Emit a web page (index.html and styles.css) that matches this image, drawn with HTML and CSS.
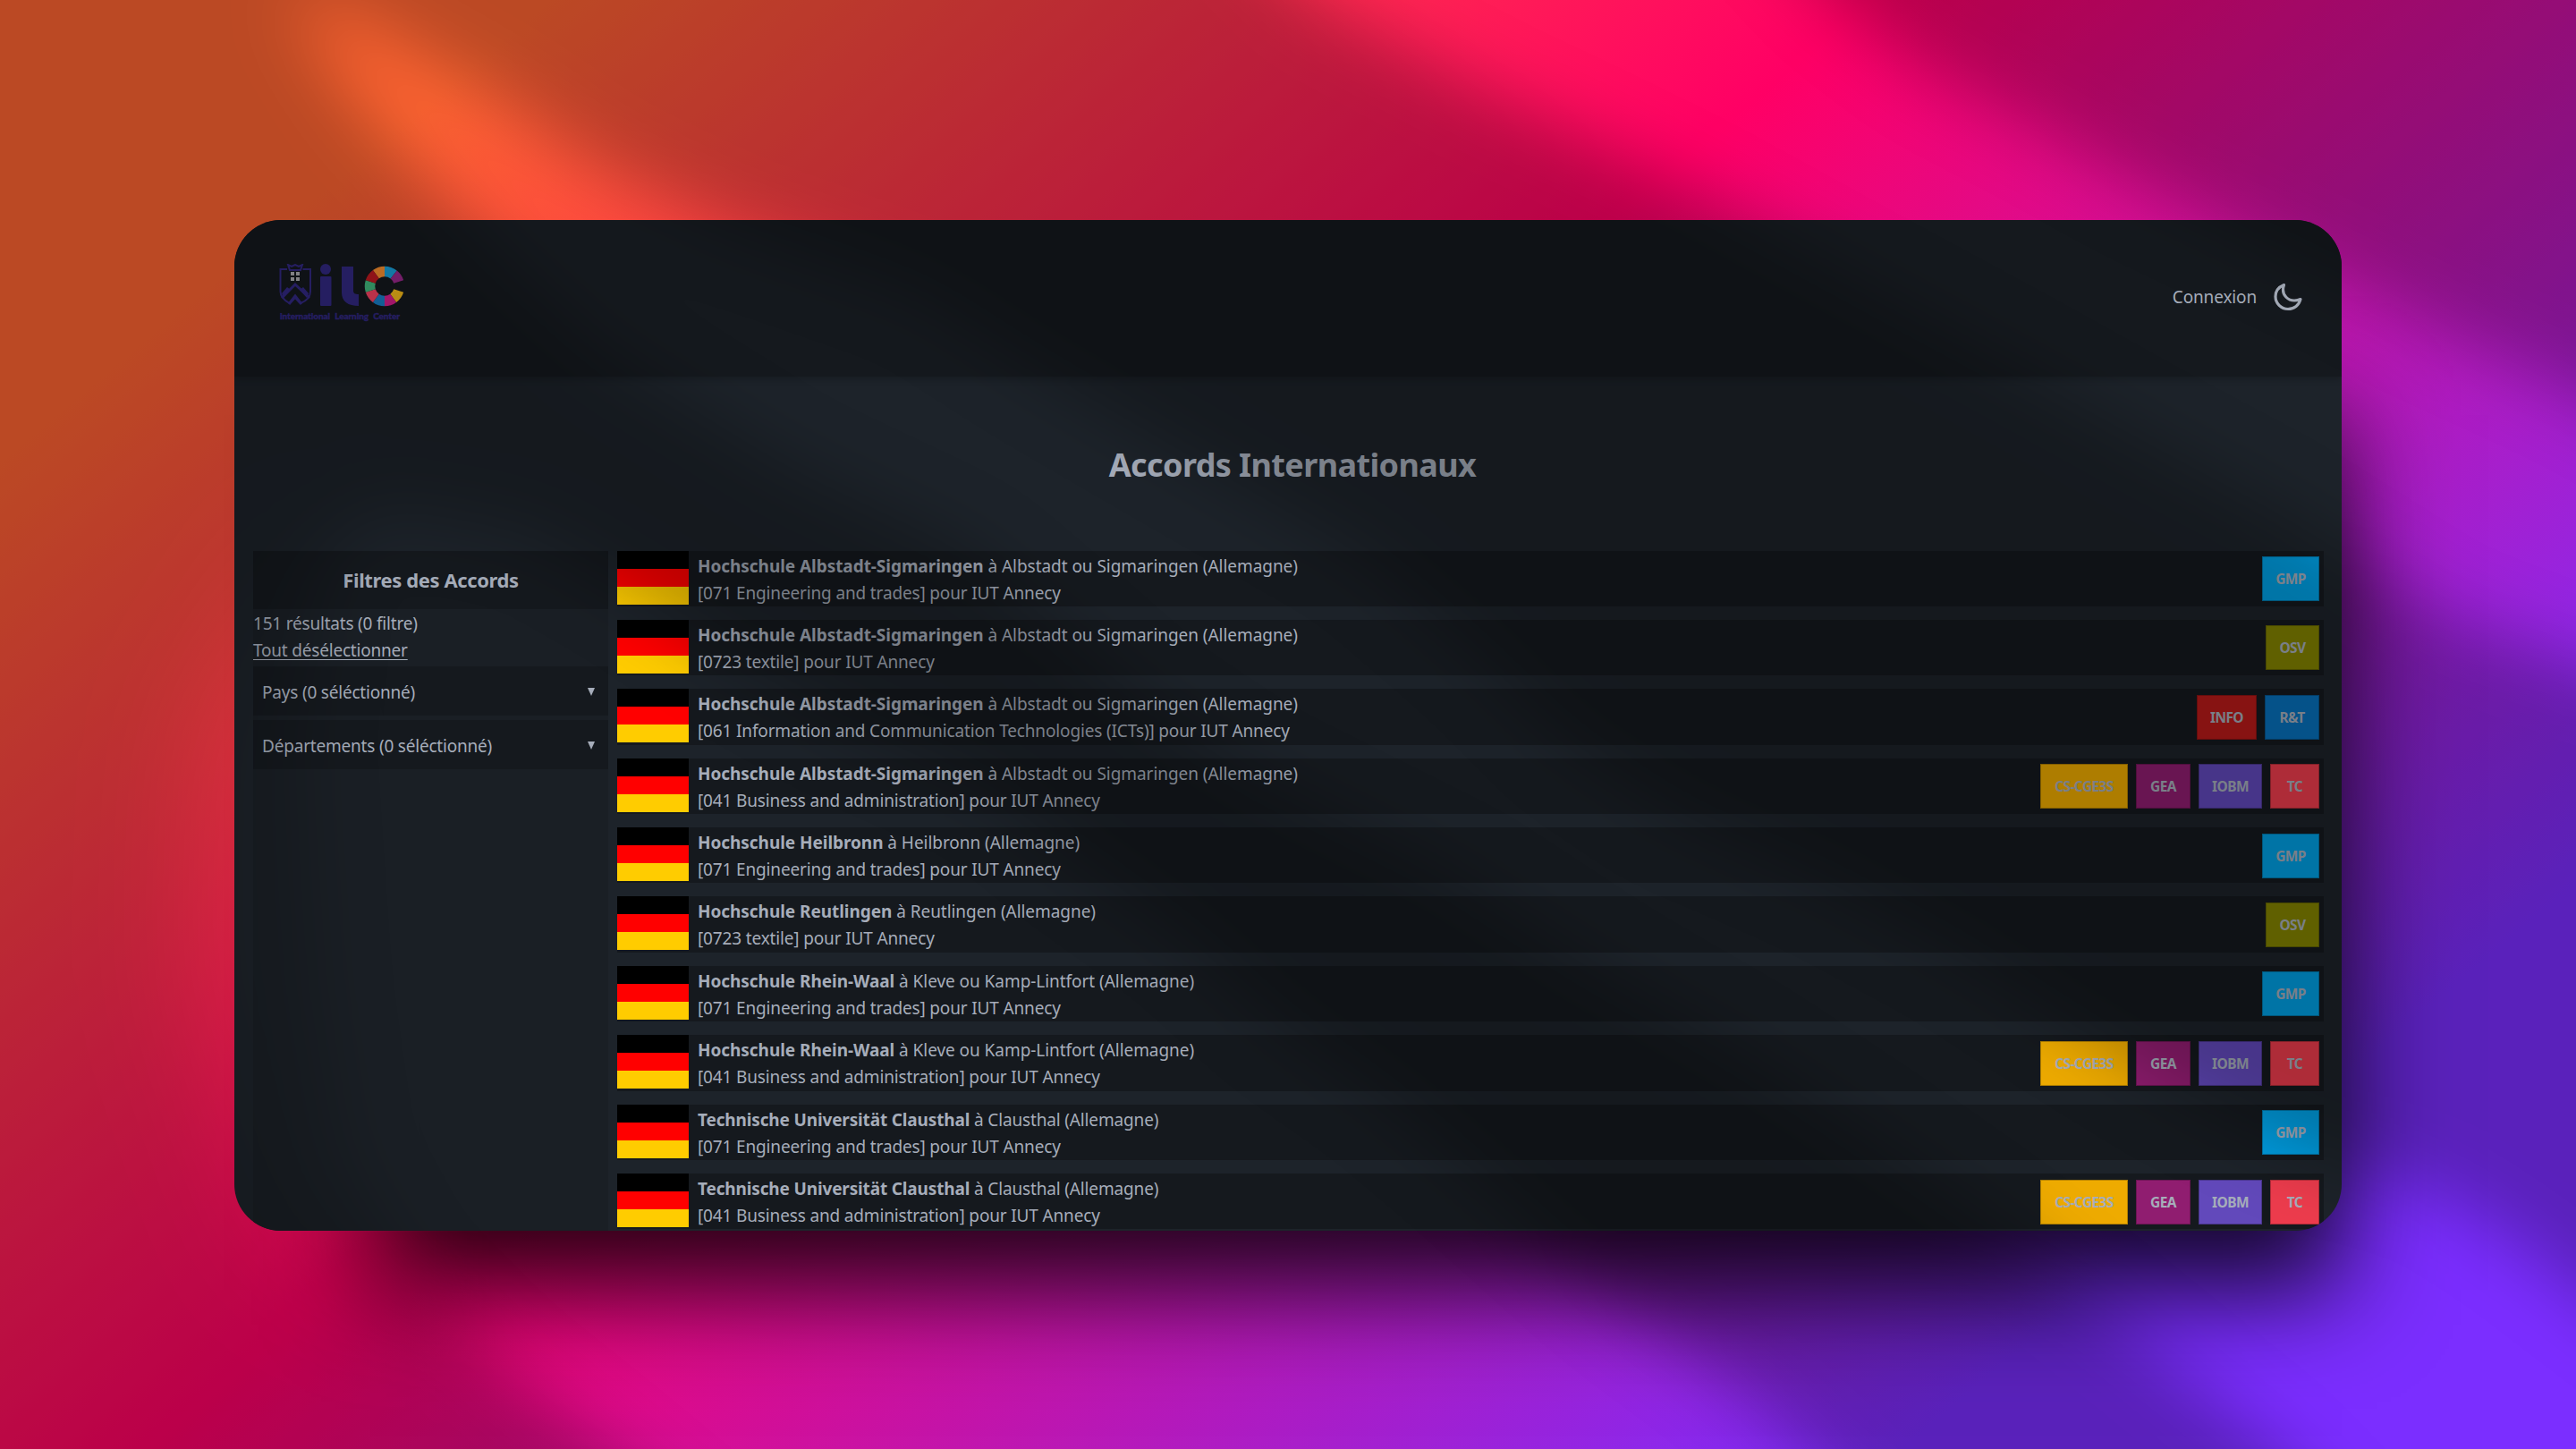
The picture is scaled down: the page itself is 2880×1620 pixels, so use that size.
FILE: index.html
```html
<!DOCTYPE html>
<html lang="fr">
<head>
<meta charset="utf-8">
<title>Accords Internationaux</title>
<link rel="stylesheet" href="styles.css">
</head>
<body>
<div class="backdrop">
  <div class="window">
    <header class="topbar">
      <svg class="logo" viewBox="0 0 150 76" width="150" height="76">
        <g fill="none" stroke="#332985" stroke-width="2">
          <path d="M10 6H2.5V31C2.5 38 9 42 12.500 44C15 43 16 41 19 38C22 41 23 43 25 44C30 42 36 38 36 31V6H27.500"/>
          <path d="M4 38L19 23L35 38M12 45L19 36L26 45" stroke-width="3"/>
          <path d="M11 1L13 7H25L27 1L23 3L19 1L15 3Z"/>
        </g>
        <path d="M4 33L10 26L14 29L6 38ZM34 33L28 26L24 29L32 38Z" fill="#332985"/>
        <path d="M14 9h4v4h-4zM20 9h4v4h-4zM14 15h4v4h-4zM20 15h4v4h-4z" fill="#b0b0b4"/>
        <g fill="#332985">
          <circle cx="53" cy="6" r="6"/>
          <rect x="47" y="14" width="12.500" height="33" rx="1"/>
          <path d="M71 3H84V30C84 33 86 34 90 34V47C78 47 71 42 71 32Z"/>
        </g>
        <g fill="none" stroke-width="11.500" transform="translate(119 25)">
          <path stroke="#ff9330" d="M-9.700 -13.300A16.500 16.500 0 0 1 0 -16.500"/>
          <path stroke="#1ba4e0" d="M0 -16.500A16.500 16.500 0 0 1 10.200 -13"/>
          <path stroke="#9d2a8f" d="M10.200 -13A16.500 16.500 0 0 1 15.700 -5"/>
          <path stroke="#fcbf1b" d="M15.700 5A16.500 16.500 0 0 1 9.700 13.300"/>
          <path stroke="#dd1e8f" d="M9.700 13.300A16.500 16.500 0 0 1 0 16.500"/>
          <path stroke="#1a80cc" d="M0 16.500A16.500 16.500 0 0 1 -9.700 13.300"/>
          <path stroke="#fc4566" d="M-9.700 13.300A16.500 16.500 0 0 1 -15.700 5"/>
          <path stroke="#43bd81" d="M-15.700 5A16.500 16.500 0 0 1 -15.700 -5"/>
          <path stroke="#c41b22" d="M-15.700 -5A16.500 16.500 0 0 1 -9.700 -13.300"/>
        </g>
        <text class="logo-caption" x="2" y="62">international Learning Center</text>
      </svg>
      <nav class="nav">
        <a class="login">Connexion</a>
        <svg class="moon" viewBox="0 0 32 32" width="32" height="32"><path d="M11.500 2.500C5.500 5 2 10 2 15.500A14 14 0 0 0 16 29.500C23 29.500 28.500 25 30 18.500C28 19.500 26 20 23 20C15.500 20 10.500 14 10.500 8C10.500 6 10.800 4.500 11.500 2.500Z" fill="none" stroke="#a6adba" stroke-width="3.200" stroke-linejoin="round"/></svg>
      </nav>
    </header>
    <h1 class="title">Accords Internationaux</h1>
    <main class="content">
      <aside class="filters">
        <h2 class="filters-title">Filtres des Accords</h2>
        <div class="summary"><span>151 résultats (0 filtre)</span><a class="clear">Tout désélectionner</a></div>
        <div class="select"><span>Pays (0 séléctionné)</span><i class="caret"></i></div>
        <div class="select"><span>Départements (0 séléctionné)</span><i class="caret"></i></div>
      </aside>
      <section class="list">
        <article class="row"><i class="flag"></i><div class="info"><p class="school"><b>Hochschule Albstadt-Sigmaringen</b> à Albstadt ou Sigmaringen (Allemagne)</p><p>[071 Engineering and trades] pour IUT Annecy</p></div><div class="badges"><span class="badge gmp">GMP</span></div></article>
        <article class="row"><i class="flag"></i><div class="info"><p class="school"><b>Hochschule Albstadt-Sigmaringen</b> à Albstadt ou Sigmaringen (Allemagne)</p><p>[0723 textile] pour IUT Annecy</p></div><div class="badges"><span class="badge osv">OSV</span></div></article>
        <article class="row"><i class="flag"></i><div class="info"><p class="school"><b>Hochschule Albstadt-Sigmaringen</b> à Albstadt ou Sigmaringen (Allemagne)</p><p>[061 Information and Communication Technologies (ICTs)] pour IUT Annecy</p></div><div class="badges"><span class="badge inf">INFO</span><span class="badge rt">R&amp;T</span></div></article>
        <article class="row"><i class="flag"></i><div class="info"><p class="school"><b>Hochschule Albstadt-Sigmaringen</b> à Albstadt ou Sigmaringen (Allemagne)</p><p>[041 Business and administration] pour IUT Annecy</p></div><div class="badges"><span class="badge cs">CS-CGE3S</span><span class="badge gea">GEA</span><span class="badge iobm">IOBM</span><span class="badge tc">TC</span></div></article>
        <article class="row"><i class="flag"></i><div class="info"><p class="school"><b>Hochschule Heilbronn</b> à Heilbronn (Allemagne)</p><p>[071 Engineering and trades] pour IUT Annecy</p></div><div class="badges"><span class="badge gmp">GMP</span></div></article>
        <article class="row"><i class="flag"></i><div class="info"><p class="school"><b>Hochschule Reutlingen</b> à Reutlingen (Allemagne)</p><p>[0723 textile] pour IUT Annecy</p></div><div class="badges"><span class="badge osv">OSV</span></div></article>
        <article class="row"><i class="flag"></i><div class="info"><p class="school"><b>Hochschule Rhein-Waal</b> à Kleve ou Kamp-Lintfort (Allemagne)</p><p>[071 Engineering and trades] pour IUT Annecy</p></div><div class="badges"><span class="badge gmp">GMP</span></div></article>
        <article class="row"><i class="flag"></i><div class="info"><p class="school"><b>Hochschule Rhein-Waal</b> à Kleve ou Kamp-Lintfort (Allemagne)</p><p>[041 Business and administration] pour IUT Annecy</p></div><div class="badges"><span class="badge cs">CS-CGE3S</span><span class="badge gea">GEA</span><span class="badge iobm">IOBM</span><span class="badge tc">TC</span></div></article>
        <article class="row"><i class="flag"></i><div class="info"><p><b>Technische Universität Clausthal</b> à Clausthal (Allemagne)</p><p>[071 Engineering and trades] pour IUT Annecy</p></div><div class="badges"><span class="badge gmp">GMP</span></div></article>
        <article class="row"><i class="flag"></i><div class="info"><p><b>Technische Universität Clausthal</b> à Clausthal (Allemagne)</p><p>[041 Business and administration] pour IUT Annecy</p></div><div class="badges"><span class="badge cs">CS-CGE3S</span><span class="badge gea">GEA</span><span class="badge iobm">IOBM</span><span class="badge tc">TC</span></div></article>
      </section>
    </main>
  </div>
  <!-- Window-blind shade: darkens everything except three soft beams of light -->
  <svg class="shade" viewBox="0 0 1568 882" preserveAspectRatio="none">
    <defs>
      <filter id="soft" x="-200" y="-200" width="2000" height="1300" filterUnits="userSpaceOnUse"><feGaussianBlur stdDeviation="21"/></filter>
      <filter id="wide" x="-200" y="-200" width="2000" height="1300" filterUnits="userSpaceOnUse"><feGaussianBlur stdDeviation="36"/></filter>
      <mask id="beams" maskUnits="userSpaceOnUse" x="0" y="0" width="1568" height="882">
        <rect width="1568" height="882" fill="#fff"/>
        <g filter="url(#soft)">
          <path d="M175 -5L215 10L300 58L365 102L440 138L560 180L630 225L730 283L830 340L900 400L950 450L1020 497L1110 537L1190 580L1260 625L1330 668L1400 702L1480 724L1530 756L1640 840V960H1460L1385 882L1220 749L1150 700L1060 640L960 583L880 530L760 470L700 430L650 386L590 335L480 283L370 215L310 160L265 115L215 60Z"/>
          <path d="M740 -60L800 0L905 56L965 84L1030 116L1110 160L1230 225L1300 264L1390 312L1490 375L1640 430V280L1568 240L1470 195L1410 165L1350 136L1300 112L1250 84L1170 42L1115 0L1060 -60Z"/>
          <path d="M195 345L230 310L320 325L390 365L440 400L520 445L600 480L650 520L720 570L780 625L840 667L890 709L980 790L1060 850L1160 940H440L370 882L305 830L245 770L210 705L195 600L185 450Z"/>
        </g>
        <path filter="url(#wide)" fill-opacity=".45" d="M120 440L200 320L260 500V800L170 760L115 600Z"/>
      </mask>
    </defs>
    <rect width="1568" height="882" fill-opacity=".265" mask="url(#beams)"/>
  </svg>
</div>
</body>
</html>
```
FILE: styles.css
```css
* { box-sizing: border-box; }
body { margin: 0; }
h1, h2, p { margin: 0; }

.backdrop {
  position: relative;
  width: 2880px;
  height: 1620px;
  overflow: hidden;
  padding: 246px 262px 0;
  background: linear-gradient(140deg, rgb(255,100,50) 12.8%, rgb(255,0,101) 43.52%, rgb(123,46,255) 84.34%);
  font-family: "Noto Sans", sans-serif;
  font-size: 19px;
  letter-spacing: -.15px;
  color: #a6adba;
}
.shade { position: absolute; inset: 0; width: 100%; height: 100%; pointer-events: none; }

.window {
  width: 2356px;
  height: 1129.5px;
  overflow: hidden;
  border-radius: 52px;
  background: #1d232a;
  box-shadow: 76px 142px 110px -76px rgba(0,0,0,.84);
}
.topbar {
  position: relative;
  height: 175px;
  padding: 49px 44px 0 49px;
  display: flex;
  justify-content: space-between;
  align-items: flex-start;
  background: #15191e;
  box-shadow: 0 2px 8px rgba(0,0,0,.25);
}
.logo-caption { font: 900 10px Lato, sans-serif; letter-spacing: -.1px; word-spacing: 3px; fill: #332985; stroke: #332985; stroke-width: .4px; }
.nav { display: flex; align-items: center; gap: 19px; padding-top: 20px; }
.login { line-height: 34px; }
.title {
  height: 194.5px;
  line-height: 198px;
  text-align: center;
  font-size: 36px;
  letter-spacing: -.6px;
  padding-left: 10px;
}
.content { display: flex; gap: 10px; padding: 0 20px 0 21px; height: 780px; }
.filters { width: 397px; background: #1a1f25; }
.filters-title { height: 65px; line-height: 65px; text-align: center; font-size: 22px; letter-spacing: -.4px; background: #15191e; }
.summary { display: flex; flex-direction: column; align-items: flex-start; line-height: 30px; height: 64.500px; padding-top: 1px; }
.summary, .select { letter-spacing: -.2px; }
.clear { text-decoration: underline; text-underline-offset: 3px; }
.select {
  display: flex;
  justify-content: space-between;
  align-items: center;
  height: 55px;
  margin-bottom: 5px;
  padding: 2px 15px 0 10px;
  background: #15191e;
}
.caret { border: 4.500px solid transparent; border-top: 9px solid #a6adba; border-bottom: 0; }
.list { flex: 1; display: flex; flex-direction: column; gap: 15px; }
.row { flex: none; display: flex; height: 62.400px; background: #15191e; }
.flag { width: 80px; height: 60px; background: linear-gradient(#000 0 20px, #f00 20px 40px, #fc0 40px); }
.info { flex: 1; padding: 2px 0 0 10px; line-height: 30px; white-space: nowrap; }
.school { letter-spacing: -.05px; }
.badges { display: flex; gap: 9px; padding: 6.500px 5px 0 0; }
.badge {
  height: 50px;
  line-height: 49px;
  text-align: center;
  font-size: 15.500px;
  letter-spacing: -.6px;
  font-weight: 700;
  border: 1px solid rgba(0,0,0,.25);
}
.gmp { width: 64px; background: #009fe3; }
.osv { width: 60px; background: #848400; }
.inf { width: 67px; background: #b81a19; }
.rt { width: 61px; background: #0770bb; }
.cs { width: 98px; background: #eeab00; }
.gea { width: 61px; background: #901d70; }
.iobm { width: 71px; background: #6249bb; }
.tc { width: 55px; background: #ed3c4d; }
```
